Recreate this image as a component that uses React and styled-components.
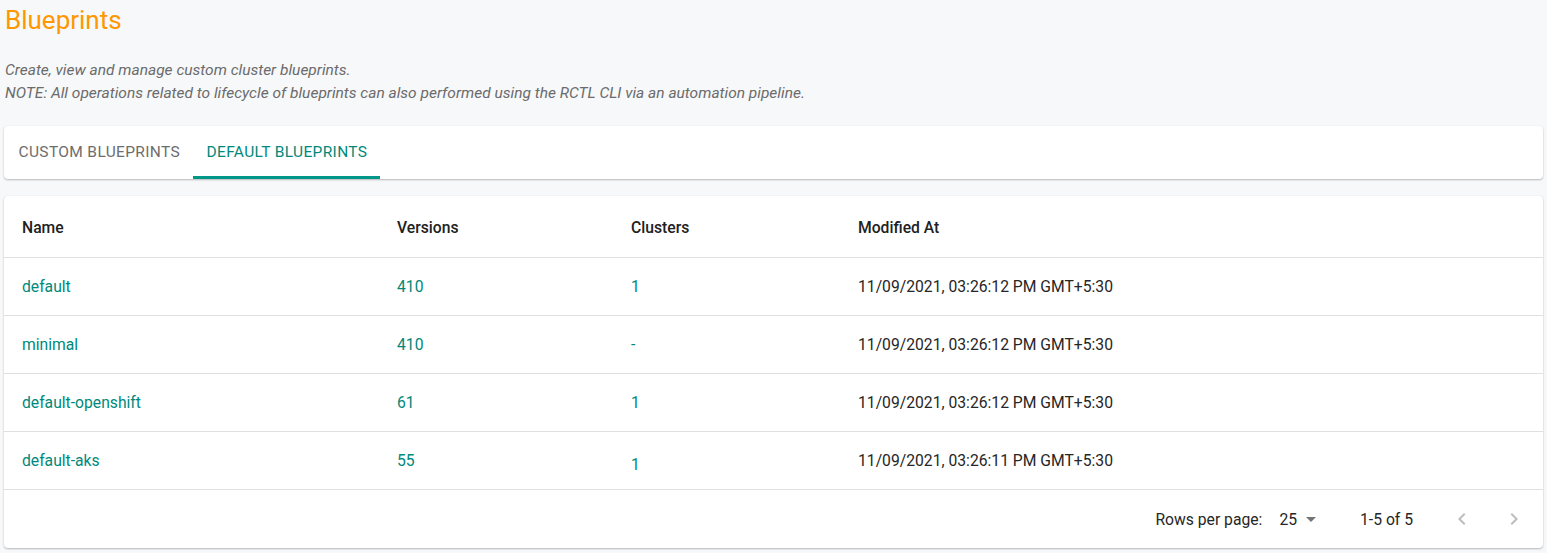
import React from "react";
import styled, { createGlobalStyle } from "styled-components";

const GlobalStyle = createGlobalStyle`
  body {
    margin: 0;
    background: #f7f8fa;
    font-family: Roboto, "Liberation Sans", sans-serif;
  }
`;

const teal = "#00897b";

const rows = [
  { name: "default", versions: "410", clusters: "1", modified: "11/09/2021, 03:26:12 PM GMT+5:30" },
  { name: "minimal", versions: "410", clusters: "-", modified: "11/09/2021, 03:26:12 PM GMT+5:30" },
  { name: "default-openshift", versions: "61", clusters: "1", modified: "11/09/2021, 03:26:12 PM GMT+5:30" },
  { name: "default-aks", versions: "55", clusters: "1", modified: "11/09/2021, 03:26:11 PM GMT+5:30", low: true },
];

const App = () => {
  return (
    <Page>
      <GlobalStyle />
      <Title>Blueprints</Title>
      <Description>
        Create, view and manage custom cluster blueprints.
        <br />
        NOTE: All operations related to lifecycle of blueprints can also performed using the RCTL CLI via an automation pipeline.
      </Description>
      <TabsCard>
        <Tab>Custom Blueprints</Tab>
        <Tab active>Default Blueprints</Tab>
      </TabsCard>
      <TableCard>
        <HeaderRow>
          <HeadCell>Name</HeadCell>
          <HeadCell>Versions</HeadCell>
          <HeadCell>Clusters</HeadCell>
          <HeadCell>Modified At</HeadCell>
        </HeaderRow>
        {rows.map((r) => (
          <Row key={r.name}>
            <LinkCell>{r.name}</LinkCell>
            <LinkCell>{r.versions}</LinkCell>
            <LinkCell low={r.low}>{r.clusters}</LinkCell>
            <Cell>{r.modified}</Cell>
          </Row>
        ))}
        <Footer>
          <FooterText>Rows per page:</FooterText>
          <Select>
            25
            <svg width="10" height="5" viewBox="0 0 10 5">
              <path d="M0 0 L5 5 L10 0 Z" fill="#757575" />
            </svg>
          </Select>
          <FooterText>1-5 of 5</FooterText>
          <PageButtons>
            <svg width="24" height="24" viewBox="0 0 24 24">
              <path d="M15.41 7.41 14 6l-6 6 6 6 1.41-1.41L10.83 12z" fill="#bdbdbd" />
            </svg>
            <svg width="24" height="24" viewBox="0 0 24 24">
              <path d="M10 6 8.59 7.41 13.17 12l-4.58 4.59L10 18l6-6z" fill="#bdbdbd" />
            </svg>
          </PageButtons>
        </Footer>
      </TableCard>
    </Page>
  );
};

export default App;

const Page = styled.div`
  padding: 4px;
  width: 1539px;
`;

const Title = styled.h1`
  margin: 0 0 0 1px;
  font-size: 26px;
  font-weight: 400;
  line-height: 33px;
  color: #ff9800;
`;

const Description = styled.p`
  margin: 22px 0 21px 1px;
  font-size: 15.5px;
  font-style: italic;
  line-height: 23px;
  color: #6b6b6b;
`;

const TabsCard = styled.div`
  display: flex;
  height: 53px;
  padding: 0 0 0 1px;
  background: #fff;
  border-radius: 4px;
  box-shadow: 0 1px 2px rgba(0, 0, 0, 0.25), 0 0 1px rgba(0, 0, 0, 0.08);
  margin-bottom: 17px;
`;

const Tab = styled.div`
  display: flex;
  align-items: center;
  padding: 2px 13px 0 13.5px;
  font-size: 15.5px;
  text-transform: uppercase;
  letter-spacing: 0.35px;
  color: ${({ active }) => (active ? teal : "#6d6d6d")};
  border-bottom: 3px solid ${({ active }) => (active ? "#009688" : "transparent")};
`;

const TableCard = styled.div`
  background: #fff;
  border-radius: 4px;
  box-shadow: 0 1px 2px rgba(0, 0, 0, 0.25), 0 0 1px rgba(0, 0, 0, 0.08);
`;

const grid = `
  display: grid;
  grid-template-columns: 375px 234px 227px 1fr;
  align-items: center;
  padding-left: 18px;
  border-bottom: 1px solid #e0e0e0;
`;

const HeaderRow = styled.div`
  ${grid}
  height: 60px;
  padding-top: 1px;
`;

const Row = styled.div`
  ${grid}
  height: 57px;
`;

const HeadCell = styled.div`
  font-size: 15.7px;
  font-weight: 500;
  color: #212121;
`;

const Cell = styled.div`
  font-size: 15.7px;
  color: #262626;
`;

const LinkCell = styled(Cell)`
  color: ${teal};
  padding-top: ${({ low }) => (low ? "7px" : "0")};
`;

const Footer = styled.div`
  display: flex;
  align-items: center;
  justify-content: flex-end;
  height: 58px;
  padding-right: 17px;
`;

const FooterText = styled.span`
  font-size: 15.7px;
  color: #262626;
`;

const Select = styled.div`
  display: flex;
  align-items: center;
  gap: 9px;
  margin: 0 44px 0 17px;
  font-size: 15.7px;
  color: #262626;
`;

const PageButtons = styled.div`
  display: flex;
  gap: 28px;
  margin-left: 37px;
  svg {
    display: block;
  }
`;
